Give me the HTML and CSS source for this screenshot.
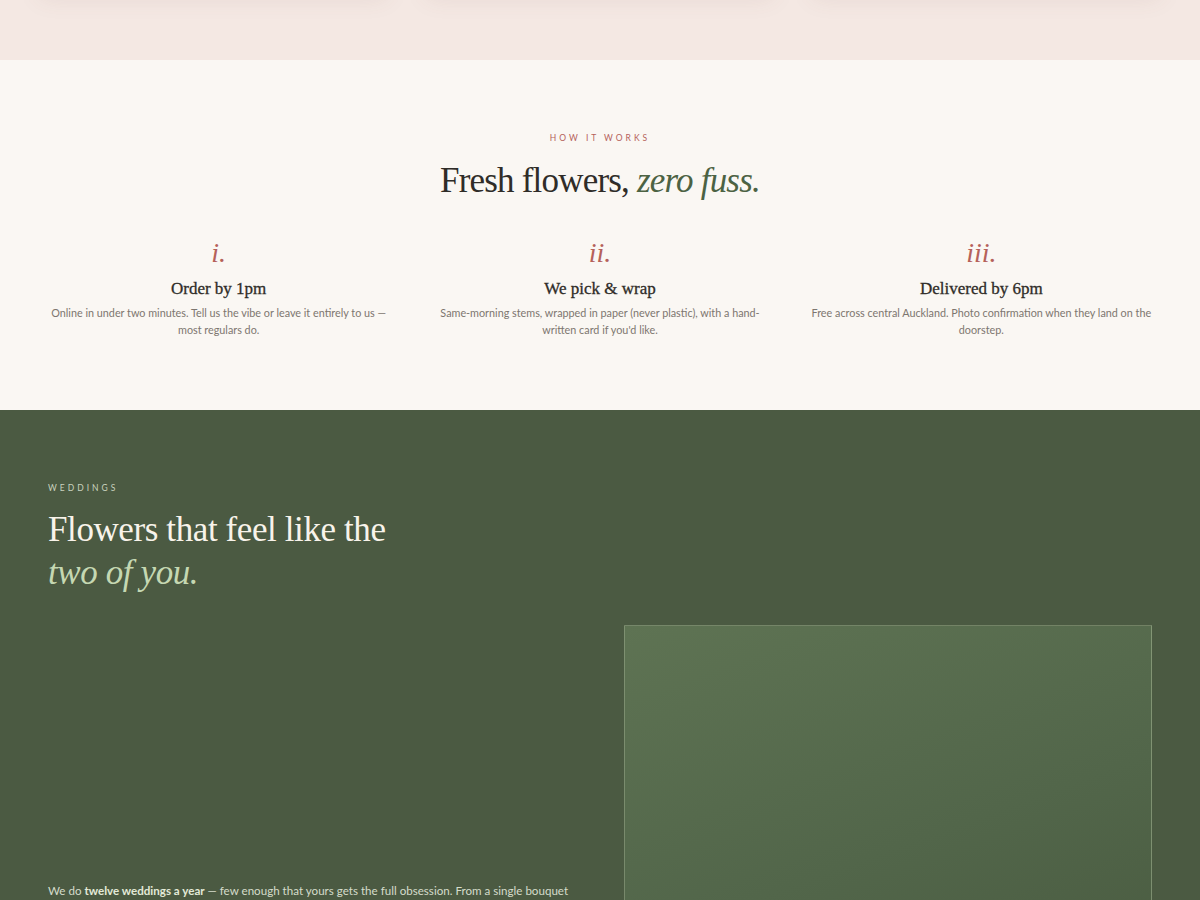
FILE: index.html
```html
<!DOCTYPE html>
<html lang="en">

<head>
    <meta charset="UTF-8">
    <meta name="viewport" content="width=device-width, initial-scale=1.0">
    <title>Fresh flowers</title>
    <link rel="stylesheet" href="styles.css">
</head>

<body>
    <!-- tail of the shop section above -->
    <section class="shop">
        <div class="shop-cards">
            <div class="shop-card"></div>
            <div class="shop-card"></div>
            <div class="shop-card"></div>
        </div>
    </section>

    <section class="how">
        <p class="eyebrow">How it works</p>
        <h2 class="how-title">Fresh flowers, <em>zero fuss.</em></h2>
        <div class="steps">
            <div class="step">
                <span class="step-num">i.</span>
                <h3>Order by 1pm</h3>
                <p>Online in under two minutes. Tell us the vibe or leave it entirely to us — most regulars do.</p>
            </div>
            <div class="step">
                <span class="step-num">ii.</span>
                <h3>We pick &amp; wrap</h3>
                <p>Same-morning stems, wrapped in paper (never plastic), with a hand-written card if you'd like.</p>
            </div>
            <div class="step">
                <span class="step-num">iii.</span>
                <h3>Delivered by 6pm</h3>
                <p>Free across central Auckland. Photo confirmation when they land on the doorstep.</p>
            </div>
        </div>
    </section>

    <section class="weddings">
        <p class="eyebrow light">Weddings</p>
        <h2 class="wed-title">Flowers that feel like the<br><em>two of you.</em></h2>
        <div class="wed-grid">
            <div class="wed-text">
                <p>We do <strong>twelve weddings a year</strong> — few enough that yours gets the full obsession. From a single bouquet to the whole venue, we start with a long chat and a walk through what you love.</p>
            </div>
            <div class="wed-photo"></div>
        </div>
    </section>
</body>

</html>
```

FILE: styles.css
```css
* {
    margin: 0;
    padding: 0;
    box-sizing: border-box;
}

body {
    font-family: "Lato", "Open Sans", sans-serif;
    background-color: #faf7f3;
}

/* 上面的商店区，只露出底部 */
.shop {
    height: 60px;
    background-color: #f4e8e3;
    overflow: hidden;
}

.shop-cards {
    display: flex;
    gap: 40px;
    padding: 0 40px;
    margin-top: -40px;
}

.shop-card {
    flex: 1;
    height: 30px;
    background-color: #f4e8e3;
    box-shadow: 0 8px 24px rgba(120, 80, 70, .1);
}

.eyebrow {
    font-size: 8.5px;
    letter-spacing: 3px;
    text-transform: uppercase;
    color: #b5615a;
}

.eyebrow.light {
    color: #c9d2bf;
}

/* how it works */
.how {
    padding: 73px 48px 72px;
    text-align: center;
}

.how-title {
    font-family: "Liberation Serif", serif;
    font-weight: normal;
    font-size: 35px;
    color: #2f2c28;
    margin-top: 18px;
    letter-spacing: -.8px;
}

.how-title em {
    color: #4c6243;
}

.steps {
    display: grid;
    grid-template-columns: repeat(3, 1fr);
    gap: 40px;
    margin-top: 35px;
}

.step-num {
    display: block;
    font-family: "Liberation Serif", serif;
    font-style: italic;
    font-size: 28px;
    line-height: 34px;
    color: #b5615a;
}

.step h3 {
    font-family: "Liberation Serif", serif;
    font-weight: normal;
    font-size: 17px;
    color: #2f2c28;
    margin-top: 9px;
    -webkit-text-stroke: .3px #2f2c28;
}

.step p {
    font-size: 10.8px;
    line-height: 17px;
    color: #7d766f;
    margin-top: 5px;
}

/* weddings */
.weddings {
    background-color: #4b5a42;
    padding: 73px 48px 0;
}

.wed-title {
    font-family: "Liberation Serif", serif;
    font-weight: normal;
    font-size: 35px;
    line-height: 43px;
    color: #f8f3ea;
    margin-top: 15px;
    letter-spacing: -.4px;
}

.wed-title em {
    color: #c5d8b2;
}

.wed-grid {
    display: grid;
    grid-template-columns: 1fr 1fr;
    gap: 48px;
    margin-top: 31px;
}

.wed-text {
    padding-top: 255px;
}

.wed-text p {
    font-size: 11.6px;
    line-height: 22px;
    color: #d5dccb;
}

.wed-text strong {
    color: #e3ead8;
}

.wed-photo {
    height: 520px;
    background: linear-gradient(160deg, #5e7353 0%, #52664a 45%, #44543a 100%);
    border: 1px solid rgba(200, 215, 180, .35);
}
```
